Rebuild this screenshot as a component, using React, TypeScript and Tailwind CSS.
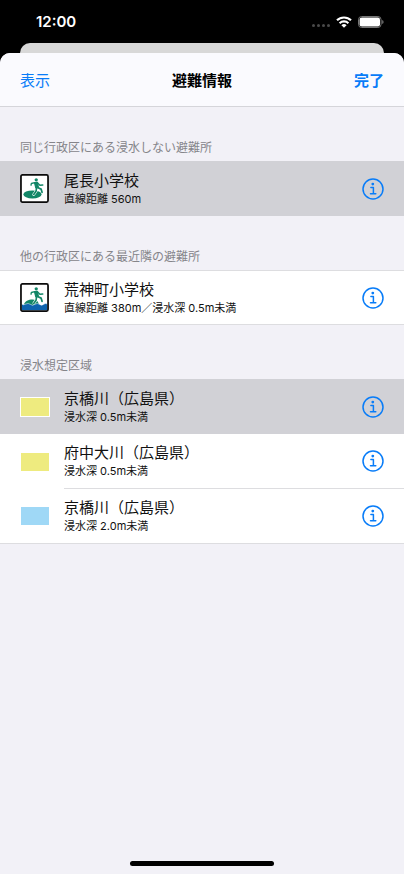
import React from "react";

type Item = {
  icon: React.ReactNode;
  title: string;
  detail: string;
  selected?: boolean;
};

function Runner() {
  return (
    <g fill="#128667" stroke="#128667" strokeLinecap="round" strokeLinejoin="round">
      <circle cx="16.8" cy="6" r="1.7" stroke="none" />
      <path d="M15 8.8 L18 8.6 L19 13.8 L16.4 14.4 Z" strokeWidth="1.3" />
      <path d="M15.2 9 L11.8 9.8 L11.4 11.6" fill="none" strokeWidth="1.4" />
      <path d="M18 9 L20.6 11.6 L23.6 11.4" fill="none" strokeWidth="1.4" />
      <path d="M18.2 14 L21.8 15.6 L22.8 19" fill="none" strokeWidth="1.8" />
      <path d="M17.2 14.2 L16.6 17.8 L14.2 21.2" fill="none" strokeWidth="1.7" />
    </g>
  );
}

function DryShelter() {
  return (
    <svg viewBox="0 0 30 30" className="size-[29px]" aria-hidden="true">
      <rect x="1" y="1" width="28" height="28" rx="1.5" fill="#fff" stroke="#0b0b0b" strokeWidth="1.8" />
      <ellipse cx="12.9" cy="21.2" rx="9.4" ry="4.2" fill="#128667" />
      <path d="M17.2 15 L16.6 17.8 L14.2 21.2" fill="none" stroke="#fff" strokeWidth="2.9" strokeLinecap="round" />
      <Runner />
    </svg>
  );
}

function FloodedShelter() {
  return (
    <svg viewBox="0 0 30 30" className="size-[29px]" aria-hidden="true">
      <rect x="1" y="1" width="28" height="28" rx="1.5" fill="#fff" />
      <path d="M4 22.5 C5 18 12 16 16.5 17.8 C18.5 18.6 19.5 20.5 19.5 23.5 Z" fill="#128667" />
      <path d="M17.2 15 L16.6 17.8 L14.4 20.8" fill="none" stroke="#fff" strokeWidth="2.9" strokeLinecap="round" />
      <Runner />
      <path
        d="M1.5 21.5 Q3.5 23.4 6 21.8 Q8.5 20.4 10.5 22 Q13 24 15.5 22 Q18 20.4 20 22 Q22.5 24 24.5 22 Q26.5 20.6 28.5 21.8 V28.5 H1.5 Z"
        fill="#0e63ae"
        stroke="#fff"
        strokeWidth="0.5"
      />
      <rect x="1" y="1" width="28" height="28" rx="1.5" fill="none" stroke="#0b0b0b" strokeWidth="1.8" />
    </svg>
  );
}

function InfoButton({ label }: { label: string }) {
  return (
    <button type="button" aria-label={`${label}の詳細`} className="shrink-0 text-[#087cf8]">
      <svg viewBox="0 0 22 22" className="size-[22px]" fill="none" stroke="currentColor">
        <circle cx="11" cy="11" r="10" strokeWidth="1.5" />
        <circle cx="10.8" cy="6.1" r="1.4" fill="currentColor" stroke="none" />
        <path d="M8.9 9.6 H11.4 V15.7 M8.5 15.8 H13.8" strokeWidth="1.5" strokeLinecap="round" strokeLinejoin="round" />
      </svg>
    </button>
  );
}

function Section({ title, items }: { title: string; items: Item[] }) {
  return (
    <section>
      <h2 className="flex h-[54px] items-end px-5 pb-[5px] text-xs leading-4 text-[#85858a]">{title}</h2>
      <ul className="bg-white">
        {items.map((item, i) => {
          const first = i === 0;
          const last = i === items.length - 1;
          const edges = item.selected ? "" : `${first ? "border-t" : ""} ${last ? "border-b" : ""}`;
          return (
            <li
              key={i}
              className={`flex h-[55px] items-center border-[#dddde0] pl-5 ${edges} ${
                item.selected ? "bg-[#d1d1d6]" : ""
              }`}
            >
              <div className="flex w-11 shrink-0 items-center">{item.icon}</div>
              <div
                className={`flex h-full min-w-0 flex-1 items-center border-[#dddde0] pr-5 ${
                  last || item.selected ? "" : "border-b"
                }`}
              >
                <div className="min-w-0 flex-1">
                  <p className="text-[15px] leading-5 text-[#111]">{item.title}</p>
                  <p className="text-[11px] leading-4 text-[#111]">{item.detail}</p>
                </div>
                <InfoButton label={item.title} />
              </div>
            </li>
          );
        })}
      </ul>
    </section>
  );
}

function StatusBar() {
  return (
    <div className="flex h-[43px] items-center justify-between pr-5 pl-9 text-white">
      <span className="text-[15px] leading-5 font-semibold">12:00</span>
      <div className="flex items-center gap-1.5">
        <div className="flex gap-0.5 pt-2">
          <i className="size-[3px] rounded-full bg-[#4a4a4a]" />
          <i className="size-[3px] rounded-full bg-[#4a4a4a]" />
          <i className="size-[3px] rounded-full bg-[#4a4a4a]" />
          <i className="size-[3px] rounded-full bg-[#4a4a4a]" />
        </div>
        <svg viewBox="0 0 16 12" className="h-3 w-4" fill="none" stroke="#fff" strokeWidth="2.1" aria-hidden="true">
          <path d="M1 4.3 A10 10 0 0 1 15 4.3" />
          <path d="M3.6 7.2 A6.3 6.3 0 0 1 12.4 7.2" />
          <path d="M8 11.8 L5.4 9.3 A3.7 3.7 0 0 1 10.6 9.3 Z" fill="#fff" stroke="none" />
        </svg>
        <svg viewBox="0 0 26 12" className="h-3 w-[26px]" aria-hidden="true">
          <rect x="0.5" y="0.5" width="22.6" height="11" rx="3.2" fill="none" stroke="#777" />
          <rect x="1.6" y="1.6" width="20.4" height="8.8" rx="2.2" fill="#fff" />
          <path d="M24.2 4 Q25.6 4.6 25.6 6 Q25.6 7.4 24.2 8 Z" fill="#777" />
        </svg>
      </div>
    </div>
  );
}

export default function App() {
  return (
    <div className="flex min-h-screen flex-col bg-black font-[Inter,'Noto_Sans_CJK_JP',sans-serif]">
      <StatusBar />
      <div className="mx-5 h-2.5 rounded-t-[10px] bg-[#d8d8d8]" />
      <main className="flex flex-1 flex-col overflow-hidden rounded-t-[10px] bg-[#f2f1f7]">
        <header className="grid h-[54px] grid-cols-3 items-center border-b border-[#d5d5da] bg-[#fafafe] px-5 pt-0.5 text-[15px] leading-6">
          <button type="button" className="justify-self-start text-[#087cf8]">
            表示
          </button>
          <h1 className="justify-self-center font-bold text-black">避難情報</h1>
          <button type="button" className="justify-self-end font-bold text-[#087cf8]">
            完了
          </button>
        </header>
        <Section
          title="同じ行政区にある浸水しない避難所"
          items={[{ icon: <DryShelter />, title: "尾長小学校", detail: "直線距離 560m", selected: true }]}
        />
        <Section
          title="他の行政区にある最近隣の避難所"
          items={[{ icon: <FloodedShelter />, title: "荒神町小学校", detail: "直線距離 380m／浸水深 0.5m未満" }]}
        />
        <Section
          title="浸水想定区域"
          items={[
            {
              icon: <span className="h-5 w-[30px] border border-white bg-[#eeeb7f]" />,
              title: "京橋川（広島県）",
              detail: "浸水深 0.5m未満",
              selected: true,
            },
            {
              icon: <span className="ml-px h-[18px] w-7 bg-[#eeeb7f]" />,
              title: "府中大川（広島県）",
              detail: "浸水深 0.5m未満",
            },
            {
              icon: <span className="ml-px h-[18px] w-7 bg-[#9fd8f6]" />,
              title: "京橋川（広島県）",
              detail: "浸水深 2.0m未満",
            },
          ]}
        />
        <div className="mt-auto flex justify-center pb-2">
          <div className="h-[5px] w-36 rounded-full bg-black" />
        </div>
      </main>
    </div>
  );
}
